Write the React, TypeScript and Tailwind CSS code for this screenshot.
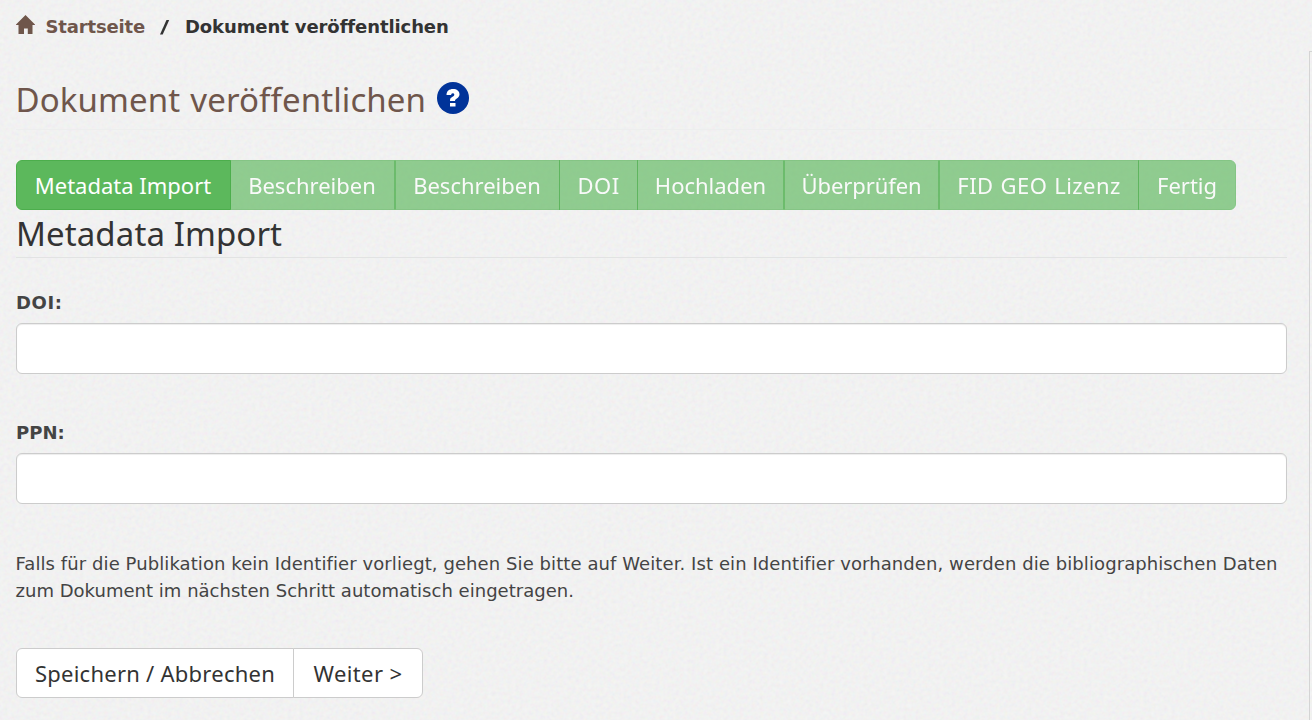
import React from "react";

const steps = [
  { label: "Metadata Import", cls: "w-[215px] rounded-l-[6px] relative z-10 border-[#4cae4c] pr-px" },
  { label: "Beschreiben", cls: "w-[165px] -ml-px opacity-65 border-[#4cae4c] border-r-[#26a026] pr-px" },
  { label: "Beschreiben", cls: "w-[165px] opacity-65 border-[#4cae4c] border-l-[#26a026] pr-px" },
  { label: "DOI", cls: "w-[79px] -ml-px opacity-65 border-[#4cae4c] tracking-[0.5px]" },
  { label: "Hochladen", cls: "w-[147px] -ml-px opacity-65 border-[#4cae4c] border-r-[#26a026]" },
  { label: "Überprüfen", cls: "w-[155px] opacity-65 border-[#4cae4c] border-x-[#26a026] tracking-[-0.1px]" },
  { label: "FID GEO Lizenz", cls: "w-[200px] opacity-65 border-[#4cae4c] border-l-[#26a026] tracking-[0.4px] [word-spacing:1px]" },
  { label: "Fertig", cls: "w-[98px] -ml-px rounded-r-[6px] opacity-65 border-[#4cae4c]" },
];

function Texture() {
  return (
    <svg className="absolute inset-0 h-full w-full opacity-[0.07]" aria-hidden="true">
      <filter id="paper">
        <feTurbulence type="fractalNoise" baseFrequency="0.25" numOctaves="3" />
        <feComponentTransfer>
          <feFuncA type="linear" slope="0" intercept="1" />
        </feComponentTransfer>
      </filter>
      <rect width="100%" height="100%" filter="url(#paper)" />
    </svg>
  );
}

function Field({ label, cls }: { label: string; cls: string }) {
  return (
    <label className="block h-[130px]">
      <span className={"block h-[35px] pt-px text-[18px] font-bold leading-[27px] text-[#444] " + cls}>{label}</span>
      <input className="block h-[51px] w-full rounded-[6px] border border-[#ccc] bg-white px-4 text-[22px] shadow-[inset_0_1px_1px_rgba(0,0,0,0.075)] outline-none" />
    </label>
  );
}

export default function App() {
  return (
    <div className="relative h-[720px] overflow-hidden bg-[#f6f6f6] font-['DejaVu_Sans',Verdana,sans-serif] text-[#333]">
      <Texture />
      <div className="absolute right-0 top-[51px] h-[669px] w-[3px] border-l border-t border-[#d4d4d4]" />
      <main className="relative pl-4 pr-[25px]">
        <nav className="flex h-[52px] items-start whitespace-pre pt-[13px] text-[18px] font-bold leading-[27px] tracking-[-0.1px]">
          <svg className="mt-[2px] h-[19px] w-[19px] fill-[#6f564b]" viewBox="0 0 19 19">
            <path d="M9.500 0 19 9.500V10h-2.500v9h-4.700v-5.500H8V19H2.500v-9H0v-.5Z" />
          </svg>
          <a className="ml-[10.500px] w-[114.500px] tracking-[-0.15px] text-[#6f564b]">Startseite</a>
          <span className="inline-block w-[25px] origin-left scale-x-[1.4]">/</span>
          <span className="tracking-[-0.1px]">Dokument veröffentlichen</span>
        </nav>
        <header className="flex h-[78px] items-start border-b border-[#edeeee] pt-[27px]">
          <h1 className="-ml-[0.500px] pt-px font-['Noto_Sans',sans-serif] text-[33px] leading-[40px] tracking-[0.1px] text-[#6f564b] [word-spacing:1.500px]">Dokument veröffentlichen</h1>
          <svg className="ml-[11px] mt-[3px] h-8 w-8" viewBox="0 0 32 32">
            <circle cx="16" cy="16" r="16" fill="#039" />
            <path d="M9.500 13c0-4 2.700-6 6.500-6s6.500 2 6.500 5.200c0 3.200-3 4.300-4 5.300-.4.500-.5 1-.5 1.500h-5c0-2 .3-2.800 1.500-3.600 1.500-1 2.800-1.600 2.800-2.700 0-1-.7-1.500-1.500-1.500-1.200 0-1.600.7-1.600 1.800ZM13 21h5.500v3.500H13Z" fill="#fff" />
          </svg>
        </header>
        <div className="mt-[30px] flex h-[50px] font-['Noto_Sans',sans-serif] text-[22px] leading-[50px] text-white">
          {steps.map((s, i) => (
            <div key={i} className={"flex h-[50px] shrink-0 items-center justify-center whitespace-nowrap border bg-[#5cb85c] " + s.cls}>
              {s.label}
            </div>
          ))}
        </div>
        <h2 className="h-[48px] border-b border-[#e2e3e3] pt-[4px] font-['Noto_Sans',sans-serif] text-[33px] leading-[40px] tracking-[0.1px]">Metadata Import</h2>
        <div className="pt-[30px]">
          <Field label="DOI:" cls="tracking-[0.6px]" />
          <Field label="PPN:" cls="tracking-[0px]" />
        </div>
        <p className="-ml-[0.500px] -mr-4 h-[100px] pt-[2px] text-[18px] leading-[27px] tracking-[0.085px] text-[#444]">
          Falls für die Publikation kein Identifier vorliegt, gehen Sie bitte auf Weiter. Ist ein Identifier vorhanden, werden die bibliographischen Daten<br />
          <span className="tracking-[0.02px]">zum Dokument im nächsten Schritt automatisch eingetragen.</span>
        </p>
        <div className="flex h-[50px] font-['Noto_Sans',sans-serif] text-[22px] [word-spacing:2px]">
          <button className="w-[278px] rounded-l-[6px] border border-[#ccc] bg-white tracking-[0.25px]">Speichern / Abbrechen</button>
          <button className="-ml-px w-[130px] rounded-r-[6px] border border-[#ccc] bg-white tracking-[0.4px]">Weiter &gt;</button>
        </div>
      </main>
    </div>
  );
}
